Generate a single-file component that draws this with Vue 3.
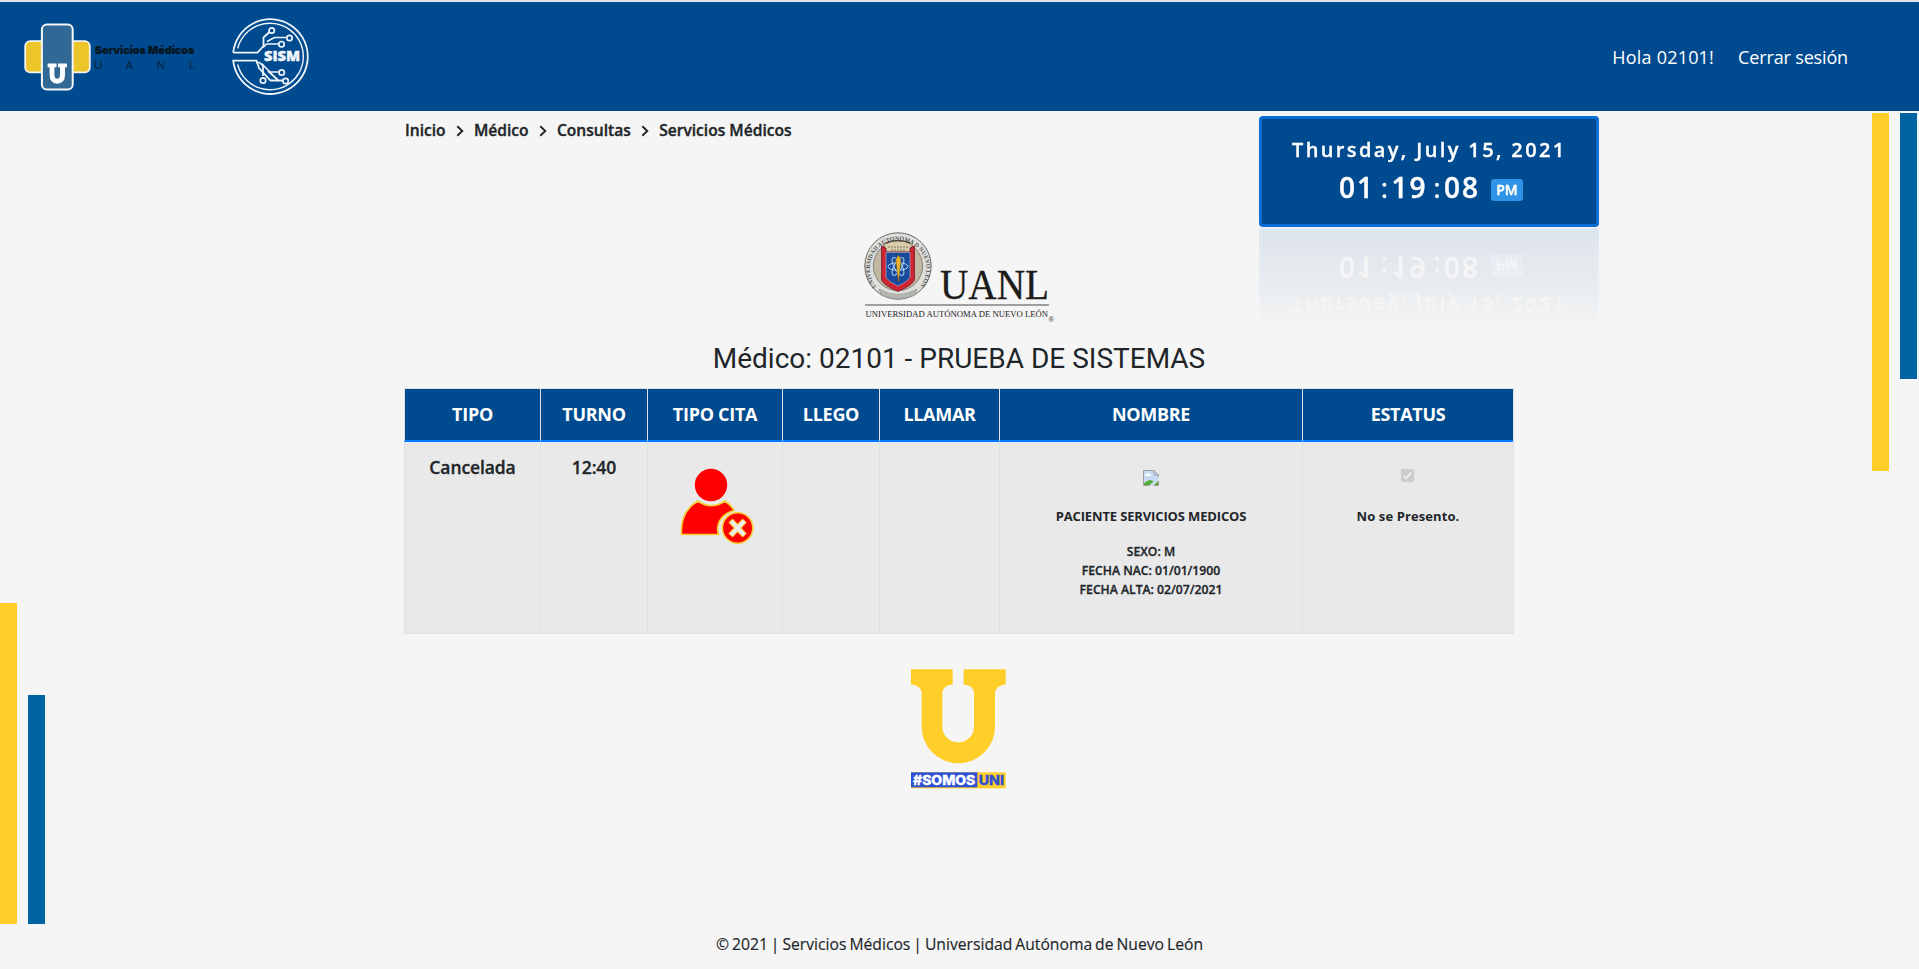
<script setup>
const crumbs = ['Inicio', 'Médico', 'Consultas', 'Servicios Médicos']
const columns = ['TIPO', 'TURNO', 'TIPO CITA', 'LLEGO', 'LLAMAR', 'NOMBRE', 'ESTATUS']
const appointments = [
  {
    type: 'Cancelada',
    time: '12:40',
    name: 'PACIENTE SERVICIOS MEDICOS',
    details: ['SEXO: M', 'FECHA NAC: 01/01/1900', 'FECHA ALTA: 02/07/2021'],
    status: 'No se Presento.'
  }
]
</script>

<template>
  <div class="page">
    <header class="navbar">
      <div class="brands">
        <svg class="brand-medical" viewBox="0 0 180 80" width="180" height="80">
          <rect x="5.2" y="24.2" width="64.6" height="31.2" rx="5" fill="#ecc52b" stroke="#f3f4f2" stroke-width="1.8" />
          <rect x="21.9" y="7.4" width="30.8" height="65" rx="5" fill="#306896" stroke="#f5f6f7" stroke-width="2" />
          <path d="M27.6 46.5H36.6V50.3H34.4V57.5Q34.4 61.7 37.2 61.7Q40 61.7 40 57.5V50.3H38V46.5H47V50.3H45V57.5Q45 66.7 37.2 66.7Q29.6 66.7 29.6 57.5V50.3H27.6Z" fill="#fff" />
          <text x="74.8" y="37.3" class="brand-title" textLength="99.5" lengthAdjust="spacingAndGlyphs">Servicios Médicos</text>
          <g class="brand-sub">
            <text x="74" y="52">U</text>
            <text x="105.5" y="52">A</text>
            <text x="136.5" y="52">N</text>
            <text x="169" y="52">L</text>
          </g>
        </svg>
        <svg class="brand-sism" viewBox="0 0 78 78" width="78" height="78" fill="none" stroke="#eef4fa">
          <path d="M1.2 33.6A37.4 37.4 0 1 1 1.2 41.6H24.5L27 49L38.5 61.5H53" stroke-width="1.8" />
          <path d="M1.2 33.6H25.5L31.5 27V18.5L38 12.5" stroke-width="1.8" />
          <path d="M5.7 29.5A33.3 33.3 0 1 1 5.7 45.5" stroke-width="1.4" />
          <path d="M31 28.5L34.5 25H46M35 22.5L42.5 18.5H54.5M27.5 43.5H24M27.5 43.5L31 47V57M29.5 44.5L38 53H46.5M36 52L46 61" stroke-width="1.7" />
          <g stroke-width="1.7" fill="#004b8f">
            <circle cx="39.7" cy="11.5" r="2.7" /><circle cx="57.5" cy="19" r="2.7" /><circle cx="49.5" cy="25.2" r="2.7" />
            <circle cx="49.7" cy="53.5" r="2.7" /><circle cx="31" cy="61.5" r="2.7" /><circle cx="53.6" cy="62" r="2.7" />
          </g>
          <text x="32" y="41.5" class="sism-text" textLength="36" lengthAdjust="spacingAndGlyphs">SISM</text>
        </svg>
      </div>
      <nav class="user-links">
        <span>Hola 02101!</span>
        <span>Cerrar sesión</span>
      </nav>
    </header>

    <main class="content">
      <section class="top-row">
        <div class="breadcrumb">
          <template v-for="(crumb, i) in crumbs" :key="crumb">
            <svg v-if="i" class="chevron" viewBox="0 0 8 12" width="8" height="12"><path d="M1.3 1.2L6.3 6L1.3 10.8" fill="none" stroke="#212529" stroke-width="1.9" /></svg>
            <span>{{ crumb }}</span>
          </template>
        </div>
        <div class="clock">
          <div class="date">Thursday, July 15, 2021</div>
          <div class="time">
            <span class="pair">01</span><span class="colon">:</span><span class="pair">19</span><span class="colon">:</span><span class="pair">08</span><span class="meridiem">PM</span>
          </div>
        </div>
      </section>

      <svg class="uanl-logo" viewBox="0 0 190 92" width="190" height="92">
        <defs>
          <path id="crest-ring" d="M12.2 54.5A28.2 28.2 0 1 1 55.8 54.5" />
        </defs>
        <circle cx="34" cy="34" r="33.2" fill="#dededb" stroke="#666" stroke-width="1" />
        <circle cx="34" cy="34" r="24.6" fill="#c3b8a4" stroke="#85817a" stroke-width="1" />
        <text class="crest-text"><textPath href="#crest-ring" textLength="126" lengthAdjust="spacingAndGlyphs">UNIVERSIDAD AUTONOMA D NUEVO LEON</textPath></text>
        <path d="M15 57Q34 68 53 57L51 63Q34 71 17 63Z" fill="#b5b5b1" stroke="#8b8b87" stroke-width=".6" />
        <path d="M20 12Q34 5 48 12V20H20Z" fill="#d9ccac" stroke="#655c49" stroke-width=".8" />
        <path d="M22 11Q34 6 46 11" fill="none" stroke="#4b463c" stroke-width="1.5" />
        <path d="M24 15H44M27 18H42" stroke="#81765d" stroke-width="1.2" stroke-dasharray="2 1" />
        <path d="M17.5 14L22 16V20H46V16L50.5 14V48Q48 53.5 34 59.5Q20 53.5 17.5 48Z" fill="#cf2433" stroke="#731d28" stroke-width=".8" />
        <path d="M22 20.5H46V45.5Q43 50 34 54Q25 50 22 45.5Z" fill="#174a9c" stroke="#b9c2d9" stroke-width=".6" />
        <g fill="none" stroke="#b3d3f2" stroke-width="1">
          <ellipse cx="34" cy="34.5" rx="10" ry="3.8" />
          <ellipse cx="34" cy="34.5" rx="10" ry="3.8" transform="rotate(60 34 34.5)" />
          <ellipse cx="34" cy="34.5" rx="10" ry="3.8" transform="rotate(120 34 34.5)" />
        </g>
        <path d="M34.5 23Q38 28 36.5 32L34.5 50L32.3 32Q30.5 28 34.5 23Z" fill="#e9b72d" stroke="#8e5d16" stroke-width=".6" />
        <text x="76" y="66.6" class="uanl-big" textLength="109" lengthAdjust="spacingAndGlyphs">UANL</text>
        <path d="M1 73H185" stroke="#4b4b4b" stroke-width="1.2" />
        <text x="1.5" y="84.5" class="uanl-small" textLength="182.5" lengthAdjust="spacingAndGlyphs">UNIVERSIDAD AUTÓNOMA DE NUEVO LEÓN</text>
        <text x="184.6" y="89.8" class="uanl-reg">®</text>
      </svg>

      <h1 class="title">Médico: 02101 - PRUEBA DE SISTEMAS</h1>

      <table class="appointments">
        <thead>
          <tr><th v-for="column in columns" :key="column">{{ column }}</th></tr>
        </thead>
        <tbody>
          <tr v-for="item in appointments" :key="item.time">
            <td>{{ item.type }}</td>
            <td>{{ item.time }}</td>
            <td>
              <svg class="cancel-icon" viewBox="0 0 74 78" width="74" height="78">
                <circle cx="31" cy="17" r="16.2" fill="red" />
                <path d="M18 33Q31 42.5 45 33Q51.5 37.5 54 42.5Q38 47 37.5 62L38.5 66.5H1.5Q0 43.5 18 33Z" fill="red" stroke="#f7ce34" stroke-width="1.6" />
                <circle cx="57.6" cy="60" r="15.2" fill="red" stroke="#f7ce34" stroke-width="1.6" />
                <path d="M50.5 52.5L64.7 67.5M64.7 52.5L50.5 67.5" stroke="#f7ce34" stroke-width="6" />
                <path d="M51 53L64.2 67M64.2 53L51 67" stroke="#ececec" stroke-width="4" />
              </svg>
            </td>
            <td></td>
            <td></td>
            <td>
              <svg class="missing-photo" viewBox="0 0 16 16" width="16" height="16">
                <path d="M.5.5H11L15.5 5V9.5L9 15.5H.5Z" fill="#c8d9f6" />
                <path d="M2 6Q2 4 4 4Q5 2 7 4Q8 4 8 6Z" fill="#fff" />
                <path d="M1 15V13.5Q4 10 7 10Q9 10 10.5 11.5L6.5 15ZM11 15L15 11V15Z" fill="#51ab34" />
                <path d="M.5 15.5V.5H11L15.5 5V7M.5 15.5H7M10.5 15.5H15.5V10.5M11 .5V5H15.5" fill="none" stroke="#a0a0a0" />
              </svg>
              <div class="patient">{{ item.name }}</div>
              <div class="details"><div v-for="line in item.details" :key="line">{{ line }}</div></div>
            </td>
            <td>
              <svg class="checkbox" viewBox="0 0 13 13" width="13" height="13">
                <rect width="13" height="13" rx="2" fill="#cccccc" />
                <path d="M2.7 6.8L5.2 9.4L10.3 3.3" fill="none" stroke="#f1f1f1" stroke-width="1.9" />
              </svg>
              <div class="status">{{ item.status }}</div>
            </td>
          </tr>
        </tbody>
      </table>

      <svg class="uni-logo" viewBox="64 41 285 359" width="95" height="119.67">
        <path d="M64 42H189V88H183Q160 92 158 112V214A47 47 0 0 0 253 214V112Q251 92 228 88H222V42H348V88H342Q319 92 316 112V214A110 110 0 0 1 96 214V112Q93 92 70 88H64Z" fill="#ffce29" />
        <rect x="64" y="351" width="284" height="48" fill="#ffce29" />
        <rect x="64" y="351" width="199" height="45" fill="#2e4fd4" />
        <text x="70" y="388" class="tag light" textLength="187" lengthAdjust="spacingAndGlyphs">#SOMOS</text>
        <text x="267" y="388" class="tag dark" textLength="76" lengthAdjust="spacingAndGlyphs">UNI</text>
      </svg>
    </main>

    <footer class="footer">© 2021 | Servicios Médicos | Universidad Autónoma de Nuevo León</footer>

    <i class="stripe left yellow"></i>
    <i class="stripe left blue"></i>
    <i class="stripe right yellow"></i>
    <i class="stripe right blue"></i>
  </div>
</template>

<style>
body { background: #f5f5f5; overflow: hidden; }
</style>

<style scoped>
.page {
  position: relative;
  box-sizing: border-box;
  width: 1919px;
  height: 969px;
  overflow: hidden;
  display: flex;
  flex-direction: column;
  background: #f5f5f5;
  color: #212529;
  font-family: "Open Sans", "Noto Sans", sans-serif;
}
svg { display: block; overflow: visible; }
.navbar {
  flex: none;
  display: flex;
  justify-content: space-between;
  box-sizing: border-box;
  height: 111px;
  border-top: 2px solid #e1e5ea;
  background: #004b8f;
}
.brands { display: flex; padding: 15px 0 0 20px; }
.brand-title { font: 900 10.6px Inter, "Open Sans", sans-serif; fill: #071521; stroke: #071521; stroke-width: .2; }
.brand-sub { font: 400 11.5px "Liberation Sans", sans-serif; fill: #06233f; }
.brand-sism { margin: 2px 0 0 32px; }
.sism-text { font: 800 14px "Open Sans", sans-serif; fill: #f2f7fb; stroke: #f2f7fb; stroke-width: .4; }
.user-links {
  display: flex;
  gap: 24px;
  padding-right: 71px;
  color: #fff;
  font-size: 18px;
  line-height: 110px;
}
.user-links span:last-child { letter-spacing: -.15px; }
.user-links span:first-child { letter-spacing: .2px; }

.content { padding-left: 404px; height: 814px; flex: none; }
.top-row { display: flex; justify-content: space-between; width: 1195px; height: 120px; }
.breadcrumb {
  display: flex;
  align-items: center;
  height: 24px;
  margin-top: 7px;
  padding-left: 1px;
  font-size: 15.6px;
  font-weight: 600;
  -webkit-text-stroke: .35px currentColor;
}
.chevron { margin: 2px 10px 0 10.3px; }
.clock {
  box-sizing: border-box;
  width: 340px;
  height: 111px;
  margin-top: 5px;
  padding-top: 18px;
  border: 3px solid #0a6dd4;
  border-radius: 4px;
  background: #004b8f;
  color: #fff;
  font-weight: 600;
  -webkit-text-stroke: .3px currentColor;
  -webkit-box-reflect: below 1px linear-gradient(transparent 3%, rgba(0, 0, 0, .1));
}
.date { padding-left: 30px; font-size: 20px; line-height: 26px; letter-spacing: 2.38px; white-space: nowrap; }
.time { display: flex; justify-content: center; height: 40px; margin-top: 4px; padding-left: 5px; font-size: 28px; line-height: 40px; -webkit-text-stroke: .4px currentColor; }
.pair { width: 38.5px; letter-spacing: 2px; }
.pair:first-child { margin-left: -1px; }
.colon { width: 14px; text-align: center; font-weight: 400; }
.meridiem {
  width: 32px;
  height: 22px;
  margin: 12px 0 0 8.5px;
  border-radius: 3px;
  background: #2f93e6;
  font-size: 14px;
  line-height: 22px;
  text-align: center;
}
.uanl-logo { margin: 1px 0 0 460px; }
.crest-text { font: 700 6px "Liberation Serif", serif; fill: #555; }
.uanl-big { font: 400 42px "Liberation Serif", serif; fill: #1c1c1c; stroke: #1c1c1c; stroke-width: .3; }
.uanl-small { font: 400 9.2px "Liberation Serif", serif; fill: #1a1a1a; }
.uanl-reg { font: 400 7.5px "Liberation Sans", sans-serif; fill: #333; }
.title {
  width: 1110px;
  margin: 18px 0 12px;
  text-align: center;
  font: 400 28px/34px Roboto, sans-serif;
}
.appointments {
  width: 1110px;
  table-layout: fixed;
  border-collapse: separate;
  border-spacing: 0;
  border: solid #dee2e6;
  border-width: 1px 1px 1px 0;
  text-align: center;
}
.appointments th, .appointments td { box-sizing: border-box; padding: 0; border-left: 1px solid #dee2e6; }
.appointments th {
  height: 53px;
  padding-bottom: 2px;
  border-bottom: 2px solid #007bff;
  background: #004b8f;
  color: #fff;
  font-size: 18px;
  font-weight: 700;
  letter-spacing: -.3px;
}
.appointments th:nth-child(1) { width: 136px; }
.appointments th:nth-child(2) { width: 107px; }
.appointments th:nth-child(3) { width: 135px; }
.appointments th:nth-child(4) { width: 97px; }
.appointments th:nth-child(5) { width: 120px; }
.appointments th:nth-child(6) { width: 303px; }
.appointments td {
  height: 191px;
  padding-top: 13px;
  vertical-align: top;
  background: #e9e9e9;
  font-size: 17.5px;
  font-weight: 600;
  line-height: 24px;
  letter-spacing: -.1px;
  -webkit-text-stroke: .3px currentColor;
}
.cancel-icon { margin: 13px 0 0 31.5px; }
.missing-photo { margin: 15px auto 18px; }
.patient, .status { font-size: 13px; font-weight: 700; line-height: 24px; letter-spacing: -.14px; -webkit-text-stroke: 0; }
.status { letter-spacing: .1px; }
.details { margin-top: 14px; font-size: 12.2px; line-height: 19.2px; letter-spacing: 0; }
.checkbox { margin: 14px 0 22px 98px; }
.uni-logo { margin: 35px 0 0 507px; }
.tag { font: 800 39px Inter, "Open Sans", sans-serif; }
.light { fill: #fff; stroke: #fff; stroke-width: .8; }
.dark { fill: #2e4fd4; stroke: #2e4fd4; stroke-width: .8; }
.footer { padding-top: 7px; text-align: center; font-size: 15.7px; line-height: 24px; word-spacing: -1.1px; -webkit-text-stroke: .15px currentColor; }
.stripe { position: absolute; }
.yellow { width: 17px; background: #ffce29; }
.blue { width: 17px; background: #0063a2; }
.left.yellow { left: 0; top: 603px; height: 321px; }
.left.blue { left: 28px; top: 695px; height: 229px; }
.right.yellow { left: 1872px; top: 113px; height: 358px; }
.right.blue { left: 1900px; top: 113px; height: 266px; }
</style>
